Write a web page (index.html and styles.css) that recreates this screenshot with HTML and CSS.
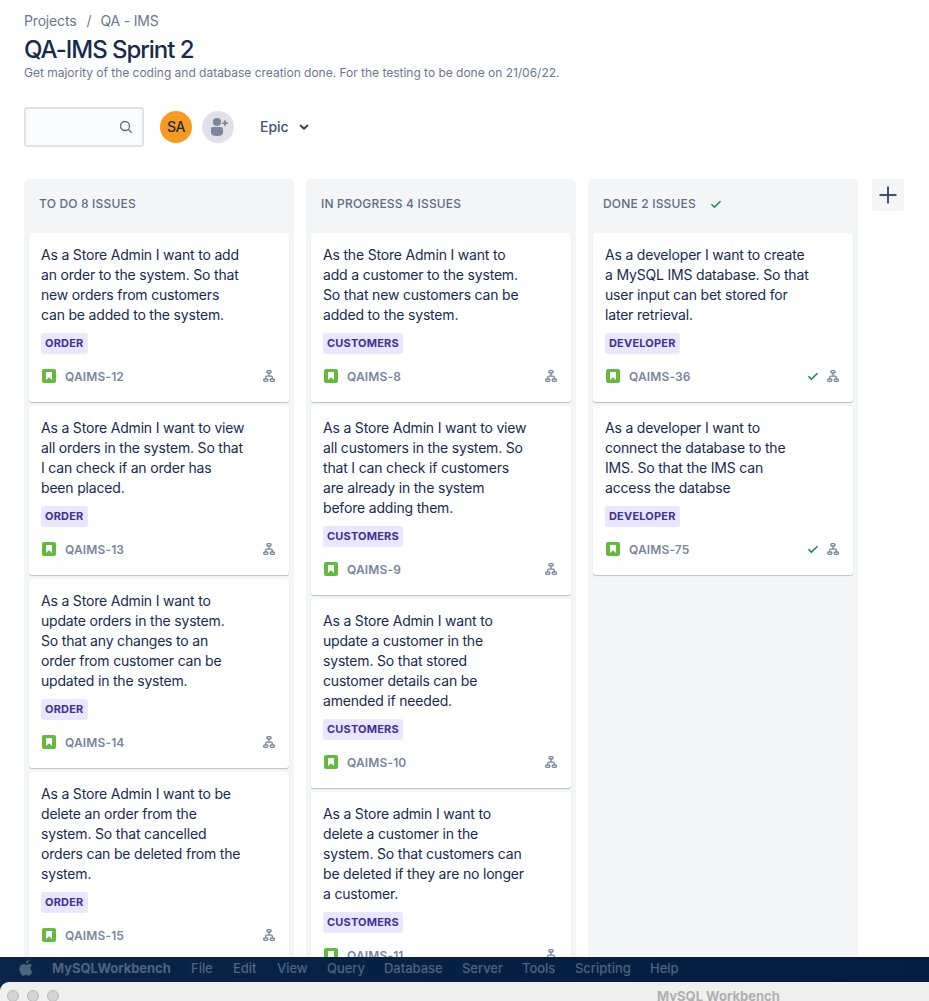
FILE: index.html
```html
<!DOCTYPE html>
<html lang="en">
<head>
<meta charset="utf-8">
<title>QA-IMS Sprint 2</title>
<link rel="stylesheet" href="styles.css">
</head>
<body>
<svg class="symbols" aria-hidden="true">
  <symbol id="story" viewBox="0 0 14 14"><rect width="14" height="14" rx="2" fill="#63ba3c"/><path d="M4.4 3h5.2c.3 0 .4.2.4.4V11L7 8.2 4 11V3.400c0-.2.1-.4.4-.4z" fill="#fff"/></symbol>
  <symbol id="tree" viewBox="0 0 12 12"><g fill="none" stroke="#7a869a" stroke-width="1.300"><rect x="3.900" y=".7" width="4.200" height="2.300" rx="1.100"/><rect x=".7" y="9" width="4.200" height="2.300" rx="1.100"/><rect x="7.200" y="9" width="4.200" height="2.300" rx="1.100"/><path d="M6 3v3.200M2.700 9V7.200q0-1 1-1h4.600q1 0 1 1V9"/></g></symbol>
  <symbol id="check" viewBox="0 0 12 12"><path d="M1.400 6.200l3 2.900 6.200-5.800" fill="none" stroke="#1f845a" stroke-width="1.500"/></symbol>
</svg>
<main class="page">
  <nav class="crumbs"><span>Projects</span><span class="slash">/</span><span>QA - IMS</span></nav>
  <h1 class="title">QA-IMS Sprint 2</h1>
  <p class="goal">Get majority of the coding and database creation done. For the testing to be done on 21/06/22.</p>
  <div class="filters">
    <div class="search"><svg width="14" height="14" viewBox="0 0 14 14" fill="none" stroke="#5e6c84" stroke-width="1.300"><circle cx="6" cy="6" r="4.500"/><path d="M9.300 9.300l3.400 3.400"/></svg></div>
    <div class="avatar">SA</div>
    <div class="avatar add"><svg width="32" height="32" viewBox="0 0 32 32" fill="#7a869a"><circle cx="15" cy="11" r="4.100"/><path d="M11 16h8q2 0 2 2v3.500q0 3.500-6 3.500t-6-3.500V18q0-2 2-2z"/><path d="M23 10.200v4M21 12.200h4" stroke="#7a869a" stroke-width="1.800" stroke-linecap="round"/></svg></div>
    <div class="epic">Epic<svg width="10" height="8" viewBox="0 0 10 8"><path d="M1.600 2.600L5 5.800l3.400-3.200" fill="none" stroke="#344563" stroke-width="2" stroke-linecap="round" stroke-linejoin="round"/></svg></div>
  </div>
  <div class="board">
    <section class="column">
      <h2 class="head">TO DO 8 ISSUES</h2>
      <article class="card"><p class="text">As a Store Admin I want to add<br>an order to the system. So that<br>new orders from customers<br>can be added to the system.</p><span class="label">ORDER</span><div class="meta"><svg class="story"><use href="#story"/></svg><span class="key">QAIMS-12</span><svg class="tree"><use href="#tree"/></svg></div></article>
      <article class="card"><p class="text">As a Store Admin I want to view<br>all orders in the system. So that<br>I can check if an order has<br>been placed.</p><span class="label">ORDER</span><div class="meta"><svg class="story"><use href="#story"/></svg><span class="key">QAIMS-13</span><svg class="tree"><use href="#tree"/></svg></div></article>
      <article class="card"><p class="text">As a Store Admin I want to<br>update orders in the system.<br>So that any changes to an<br>order from customer can be<br>updated in the system.</p><span class="label">ORDER</span><div class="meta"><svg class="story"><use href="#story"/></svg><span class="key">QAIMS-14</span><svg class="tree"><use href="#tree"/></svg></div></article>
      <article class="card"><p class="text">As a Store Admin I want to be<br>delete an order from the<br>system. So that cancelled<br>orders can be deleted from the<br>system.</p><span class="label">ORDER</span><div class="meta"><svg class="story"><use href="#story"/></svg><span class="key">QAIMS-15</span><svg class="tree"><use href="#tree"/></svg></div></article>
    </section>
    <section class="column">
      <h2 class="head">IN PROGRESS 4 ISSUES</h2>
      <article class="card"><p class="text">As the Store Admin I want to<br>add a customer to the system.<br>So that new customers can be<br>added to the system.</p><span class="label customers">CUSTOMERS</span><div class="meta"><svg class="story"><use href="#story"/></svg><span class="key">QAIMS-8</span><svg class="tree"><use href="#tree"/></svg></div></article>
      <article class="card"><p class="text">As a Store Admin I want to view<br>all customers in the system. So<br>that I can check if customers<br>are already in the system<br>before adding them.</p><span class="label customers">CUSTOMERS</span><div class="meta"><svg class="story"><use href="#story"/></svg><span class="key">QAIMS-9</span><svg class="tree"><use href="#tree"/></svg></div></article>
      <article class="card"><p class="text">As a Store Admin I want to<br>update a customer in the<br>system. So that stored<br>customer details can be<br>amended if needed.</p><span class="label customers">CUSTOMERS</span><div class="meta"><svg class="story"><use href="#story"/></svg><span class="key">QAIMS-10</span><svg class="tree"><use href="#tree"/></svg></div></article>
      <article class="card"><p class="text">As a Store admin I want to<br>delete a customer in the<br>system. So that customers can<br>be deleted if they are no longer<br>a customer.</p><span class="label customers">CUSTOMERS</span><div class="meta"><svg class="story"><use href="#story"/></svg><span class="key">QAIMS-11</span><svg class="tree"><use href="#tree"/></svg></div></article>
    </section>
    <section class="column">
      <h2 class="head">DONE 2 ISSUES<svg class="check"><use href="#check"/></svg></h2>
      <article class="card"><p class="text">As a developer I want to create<br>a MySQL IMS database. So that<br>user input can bet stored for<br>later retrieval.</p><span class="label developer">DEVELOPER</span><div class="meta"><svg class="story"><use href="#story"/></svg><span class="key">QAIMS-36</span><svg class="check"><use href="#check"/></svg><svg class="tree"><use href="#tree"/></svg></div></article>
      <article class="card"><p class="text">As a developer I want to<br>connect the database to the<br>IMS. So that the IMS can<br>access the databse</p><span class="label developer">DEVELOPER</span><div class="meta"><svg class="story"><use href="#story"/></svg><span class="key">QAIMS-75</span><svg class="check"><use href="#check"/></svg><svg class="tree"><use href="#tree"/></svg></div></article>
    </section>
    <div class="plus"><svg width="18" height="18" viewBox="0 0 18 18"><path d="M9 .5v17M.5 9h17" stroke="#42526e" stroke-width="2"/></svg></div>
  </div>
</main>
<footer class="desktop">
  <nav class="menubar">
    <svg class="apple" width="14" height="16" viewBox="0 0 14 16" fill="#50637f"><path d="M9.800 0c.1 1.900-1.300 3.500-3 3.600C6.600 1.900 8.100.2 9.800 0z"/><path d="M12.900 5.400c-2.300 1.400-1.900 4.600.6 5.600-.8 2.300-2.200 4.700-3.700 4.700-1 0-1.500-.6-2.600-.6s-1.700.6-2.600.6C2.500 15.700.4 11.900.4 8.900c0-3 1.900-4.700 3.900-4.700 1.100 0 2.100.7 2.900.7.700 0 1.800-.8 3.200-.8 1 0 1.900.5 2.500 1.300z"/></svg>
    <b class="app">MySQLWorkbench</b><span class="m1">File</span><span class="m2">Edit</span><span class="m3">View</span><span class="m4">Query</span><span class="m5">Database</span><span class="m6">Server</span><span class="m7">Tools</span><span class="m8">Scripting</span><span>Help</span>
  </nav>
  <div class="window"><i class="dot"></i><i class="dot"></i><i class="dot"></i><b class="wtitle">MySQL Workbench</b></div>
</footer>
</body>
</html>
```
FILE: styles.css
```css
* { box-sizing: border-box; }
body { margin: 0; height: 1001px; overflow: hidden; display: flex; flex-direction: column; background: #fff; color: #172b4d; font-family: Inter, "Liberation Sans", sans-serif; white-space: nowrap; }
svg { display: block; flex: none; }
h1, h2, p { margin: 0; }
.symbols { display: none; }
.page { height: 957px; padding: 11px 24px 0; overflow: hidden; }
.crumbs { display: flex; height: 20px; line-height: 20px; font-size: 14px; color: #6b778c; letter-spacing: -.17px; }
.slash { width: 24px; padding-left: 10px; }
.title { margin-top: 5px; height: 28px; line-height: 28px; font-size: 24px; font-weight: 500; letter-spacing: -1.03px; }
.goal { margin-top: 1px; height: 16px; line-height: 16px; font-size: 12px; letter-spacing: -.015px; color: #6b778c; }
.filters { display: flex; align-items: center; height: 40px; margin-top: 26px; }
.search { display: flex; align-items: center; justify-content: flex-end; width: 120px; height: 40px; padding-right: 9px; margin-right: 16px; border: 2px solid #dfe1e6; border-radius: 3px; background: #fafbfc; }
.avatar { width: 32px; height: 32px; line-height: 32px; margin-right: 10px; border-radius: 50%; background: #f79a1f; text-align: center; font-size: 14px; font-weight: 500; letter-spacing: -.4px; }
.add { background: #dfe1e6; }
.epic { display: flex; align-items: center; gap: 10px; margin-left: 16px; padding-bottom: 1px; font-size: 14px; font-weight: 500; color: #42526e; }
.board { display: flex; gap: 12px; height: 790px; margin-top: 32px; }
.column { flex: none; width: 270px; padding: 0 5px; border-radius: 5px 5px 0 0; background: #f4f5f7; }
.head { display: flex; align-items: center; gap: 14px; height: 54px; padding: 0 10px 5px; font-size: 12px; font-weight: 500; letter-spacing: .18px; color: #5e6c84; }
.card { padding: 12px 12px 14px; margin-bottom: 4px; border-radius: 3px; background: #fff; box-shadow: 0 1px 1px rgba(9, 30, 66, .25); }
.text { font-size: 14px; line-height: 20px; letter-spacing: -.185px; }
.label { display: block; width: 47px; height: 21px; margin-top: 8px; padding-left: 4px; border-radius: 3px; background: #eae6ff; color: #403294; font-size: 11px; font-weight: 700; line-height: 21px; letter-spacing: .18px; }
.customers { width: 80px; }
.developer { width: 75px; }
.meta { display: flex; align-items: center; height: 24px; margin-top: 10px; padding: 0 2px 0 1px; }
.story { width: 14px; height: 14px; }
.key { margin: 0 auto 0 9px; font-size: 12px; font-weight: 600; letter-spacing: .14px; color: #7a869a; }
.tree { width: 12px; height: 12px; }
.check { width: 12px; height: 12px; }
.meta .check { margin-right: 8px; }
.plus { display: flex; align-items: center; justify-content: center; width: 32px; height: 32px; margin-left: 2px; border-radius: 3px; background: #f4f5f7; }
.desktop { height: 44px; background: linear-gradient(90deg, #0a2547, #031c40); overflow: hidden; }
.menubar { display: flex; align-items: center; height: 25px; padding: 0 0 3px 19px; font-size: 13px; font-weight: 500; letter-spacing: -.03px; color: #50637f; }
.app { width: 139px; margin-left: 19px; font-weight: 700; }
.m1 { width: 42px; }
.m2 { width: 44px; }
.m3 { width: 50px; }
.m4 { width: 57px; }
.m5 { width: 78px; }
.m6 { width: 60px; }
.m7 { width: 53px; }
.m8 { width: 75px; }
.window { display: flex; gap: 8px; height: 28px; padding: 8px 0 0 7px; border-radius: 9px 0 0 0; background: #efefef; }
.dot { width: 12px; height: 12px; border: 1px solid #b7b7b7; border-radius: 50%; background: #d3d3d3; }
.wtitle { margin-left: 590px; font-size: 13px; line-height: 13px; color: #b0b0b0; }
```
